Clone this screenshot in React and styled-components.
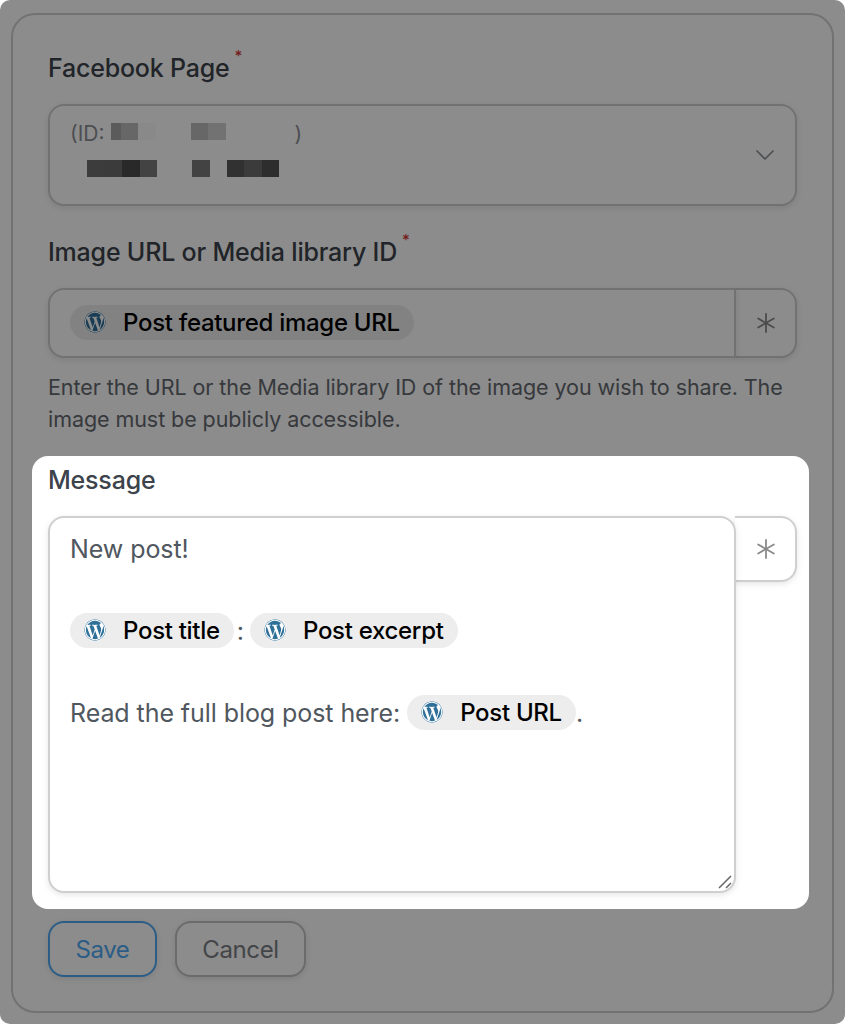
import React from "react";
import styled, { createGlobalStyle } from "styled-components";
import { FaWordpress } from "react-icons/fa";
import { Asterisk, ChevronDown } from "lucide-react";

const GlobalStyle = createGlobalStyle`
  html, body {
    margin: 0;
    background: #ffffff;
  }
  * {
    box-sizing: border-box;
  }
`;

const Screen = styled.div`
  position: relative;
  width: 845px;
  height: 1024px;
  padding: 13px 11px 11px;
  background: #ffffff;
  border-radius: 10px;
  overflow: hidden;
  font-family: "Inter", sans-serif;
  color: #50575e;
`;

const Overlay = styled.div`
  position: absolute;
  inset: 0;
  z-index: 1;
  background: rgba(0, 0, 0, 0.45);
`;

const Card = styled.form`
  height: 1000px;
  padding: 35px 35px 0 35px;
  border: 2px solid #cfcfcf;
  border-radius: 24px;
  display: flex;
  flex-direction: column;
`;

const Label = styled.label`
  display: block;
  height: 36px;
  margin-top: ${(props) => props.$top || 0}px;
  font-size: 25px;
  line-height: 36px;
  font-weight: 500;
  letter-spacing: -0.2px;
  color: #3c434a;
`;

const Required = styled.sup`
  margin-left: 5px;
  font-size: 15px;
  line-height: 0;
  vertical-align: 16px;
  color: #d63638;
`;

const Select = styled.div`
  height: 102px;
  margin-top: 18px;
  padding: 11px 14px 11px 20px;
  border: 2px solid #cfcfcf;
  border-radius: 16px;
  background: #ffffff;
  box-shadow: 0 2px 6px rgba(0, 0, 0, 0.1);
  display: flex;
  align-items: flex-start;
  justify-content: space-between;
  font-size: 21px;
  color: #8c8f94;
`;

const SelectValue = styled.div`
  display: flex;
  flex-direction: column;
`;

const ValueRow = styled.div`
  height: 34px;
  display: flex;
  align-items: ${(props) => (props.$top ? "flex-start" : "center")};
  padding-left: ${(props) => props.$indent || 0}px;
`;

const RowText = styled.span`
  line-height: 34px;
`;

const Pixel = styled.span`
  width: ${(props) => props.$w || 17.5}px;
  height: 17px;
  margin-left: ${(props) => props.$gap || 0}px;
  margin-top: ${(props) => (props.$top ? 6 : 0)}px;
  background: ${(props) => props.$shade};
`;

const Chevron = styled(ChevronDown)`
  align-self: center;
  color: #8c8f94;
`;

const InputGroup = styled.div`
  display: flex;
  align-items: flex-start;
  margin-top: ${(props) => props.$top}px;
  border-radius: 16px;
`;

const InputBox = styled.div`
  flex: 1;
  min-width: 0;
  height: ${(props) => props.$height}px;
  padding: ${(props) => (props.$multi ? "11px 20px" : "13px 20px")};
  border: 2px solid #cfcfcf;
  border-radius: ${(props) => (props.$multi ? "16px" : "16px 0 0 16px")};
  background: #ffffff;
  box-shadow: 0 2px 6px rgba(0, 0, 0, 0.1);
  position: relative;
  font-size: 25px;
  line-height: 41px;
  letter-spacing: -0.07px;
`;

const Addon = styled.div`
  width: 62px;
  height: ${(props) => props.$height}px;
  margin-left: -1px;
  padding-left: 2px;
  border: 2px solid #cfcfcf;
  border-left: none;
  border-radius: 0 16px 16px 0;
  background: #ffffff;
  box-shadow: 0 2px 6px rgba(0, 0, 0, 0.1);
  display: flex;
  align-items: center;
  justify-content: center;
  color: #8a8a8a;
`;

const Chip = styled.span`
  display: inline-flex;
  align-items: center;
  height: 35px;
  margin-bottom: 6px;
  padding: 0 14px;
  gap: 17px;
  border-radius: 18px;
  background: #ededed;
  color: #000000;
  font-size: 24px;
  font-weight: 500;
  line-height: 35px;
  letter-spacing: -0.3px;
  vertical-align: middle;
`;

const ChipLogo = styled(FaWordpress)`
  width: 22px;
  height: 22px;
  color: #2f7099;
  background: #ffffff;
  border-radius: 50%;
`;

const TextLine = styled.div`
  height: 41px;
  white-space: nowrap;
`;

const Colon = styled.span`
  margin: 0 6px 0 3px;
`;

const Help = styled.p`
  margin: 13px 0 0;
  font-size: 21.5px;
  line-height: 32px;
  letter-spacing: -0.07px;
  color: #646970;
`;

const Highlight = styled.div`
  position: relative;
  z-index: 2;
  height: 453px;
  margin: 21px -12px 0 -16px;
  padding: 6px 12px 0 16px;
  background: #ffffff;
  border-radius: 16px;
`;

const Grip = styled.svg`
  position: absolute;
  right: 0;
  bottom: 0;
  width: 18px;
  height: 18px;
`;

const Actions = styled.div`
  display: flex;
  gap: 18px;
  margin-top: 12px;
`;

const Button = styled.button`
  height: 56px;
  width: ${(props) => props.$width}px;
  padding: 0;
  border: 2px solid ${(props) => (props.$primary ? "#50aaf5" : "#c4c4c4")};
  border-radius: 16px;
  background: #ffffff;
  box-shadow: 0 2px 6px rgba(0, 0, 0, 0.1);
  font-family: inherit;
  font-size: 24px;
  letter-spacing: -0.4px;
  color: ${(props) => (props.$primary ? "#50aaf5" : "#7a7e84")};
`;

const App = () => {
  return (
    <>
      <GlobalStyle />
      <Screen>
        <Overlay />
        <Card>
          <Label>
            Facebook Page<Required>*</Required>
          </Label>
          <Select>
            <SelectValue>
              <ValueRow $top>
                <RowText>(ID:</RowText>
                <Pixel $gap={6} $top $w={10} $shade="#a6a6a6" />
                <Pixel $top $shade="#bcbcbc" />
                <Pixel $top $shade="#fafafa" />
                <Pixel $gap={35} $top $shade="#bcbcbc" />
                <Pixel $top $shade="#d0d0d0" />
                <Pixel $gap={68} $w={1} $shade="transparent" />
                <RowText>)</RowText>
              </ValueRow>
              <ValueRow $indent={17}>
                <Pixel $shade="#6e6e6e" />
                <Pixel $shade="#6c6c6c" />
                <Pixel $shade="#4c4c4c" />
                <Pixel $shade="#7a7a7a" />
                <Pixel $gap={35} $shade="#7a7a7a" />
                <Pixel $gap={17} $shade="#5a5a5a" />
                <Pixel $shade="#6c6c6c" />
                <Pixel $shade="#525252" />
              </ValueRow>
            </SelectValue>
            <Chevron size={32} strokeWidth={1.3} />
          </Select>

          <Label $top={28}>
            Image URL or Media library ID<Required>*</Required>
          </Label>
          <InputGroup $top={18}>
            <InputBox $height={70}>
              <Chip>
                <ChipLogo />
                Post featured image URL
              </Chip>
            </InputBox>
            <Addon $height={70}>
              <Asterisk size={36} strokeWidth={1.2} />
            </Addon>
          </InputGroup>
          <Help>
            Enter the URL or the Media library ID of the image you wish to
            share. The image must be publicly accessible.
          </Help>

          <Highlight>
            <Label>Message</Label>
            <InputGroup $top={18}>
              <InputBox $multi $height={377}>
                <TextLine>New post!</TextLine>
                <TextLine />
                <TextLine>
                  <Chip>
                    <ChipLogo />
                    Post title
                  </Chip>
                  <Colon>:</Colon>
                  <Chip>
                    <ChipLogo />
                    Post excerpt
                  </Chip>
                </TextLine>
                <TextLine />
                <TextLine>
                  Read the full blog post here:{" "}
                  <Chip>
                    <ChipLogo />
                    Post URL
                  </Chip>
                  .
                </TextLine>
                <Grip viewBox="0 0 18 18">
                  <path d="M3 15 15 3M10 15l5-5" stroke="#666666" strokeWidth="1.5" fill="none" />
                </Grip>
              </InputBox>
              <Addon $height={66}>
                <Asterisk size={36} strokeWidth={1.2} />
              </Addon>
            </InputGroup>
          </Highlight>

          <Actions>
            <Button type="button" $primary $width={109}>
              Save
            </Button>
            <Button type="button" $width={131}>
              Cancel
            </Button>
          </Actions>
        </Card>
      </Screen>
    </>
  );
};

export default App;
